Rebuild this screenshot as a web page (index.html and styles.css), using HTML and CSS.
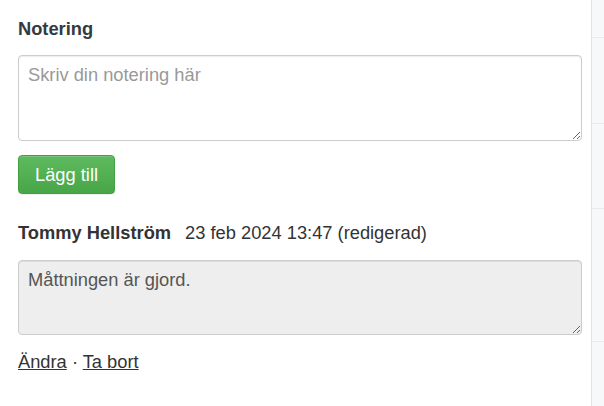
FILE: index.html
```html
<!DOCTYPE html>
<html lang="sv">
<head>
<meta charset="utf-8">
<link rel="stylesheet" href="styles.css">
</head>
<body>
<div class="page">
  <main class="main">
    <div class="label">Notering</div>
    <textarea class="field" placeholder="Skriv din notering här"></textarea>
    <button class="btn-success" type="button">Lägg till</button>
    <div class="meta"><span class="author">Tommy Hellström</span><span class="date">23 feb 2024 13:47 (redigerad)</span></div>
    <textarea class="field note" readonly>Måttningen är gjord.</textarea>
    <div class="actions"><a href="#">Ändra</a> · <a href="#">Ta bort</a></div>
  </main>
  <aside class="side">
    <div class="row r1"></div>
    <div class="row r2"></div>
    <div class="row r3"></div>
    <div class="row r4"></div>
    <div class="row r5"></div>
  </aside>
</div>
</body>
</html>
```
FILE: styles.css
```css
html, body {
  margin: 0;
  padding: 0;
  background: #fff;
}
body {
  font-family: "Liberation Sans", Arial, sans-serif;
  font-size: 18.3px;
  line-height: 26px;
  color: #333;
}
.page {
  display: flex;
  width: 604px;
  height: 406px;
  overflow: hidden;
}
.main {
  width: 591px;
  box-sizing: border-box;
  padding: 16px 9px 0 18px;
  display: flex;
  flex-direction: column;
  align-items: flex-start;
}
.label {
  font-weight: bold;
  color: #343a40;
  height: 26px;
}
.field {
  display: block;
  width: 564px;
  height: 86px;
  box-sizing: border-box;
  margin: 13px 0 0;
  padding: 6px 9px;
  border: 1px solid #ccc;
  border-radius: 4px;
  box-shadow: inset 0 1px 1px rgba(0,0,0,.075);
  font-family: "Liberation Sans", Arial, sans-serif;
  font-size: 18.3px;
  line-height: 26px;
  color: #555;
  background: #fff;
  resize: vertical;
  outline: none;
}
.field::placeholder {
  color: #999;
}
.btn-success {
  margin-top: 14px;
  height: 39px;
  padding: 6px 16px;
  border: 1px solid #42a042;
  border-radius: 4px;
  background-image: linear-gradient(to bottom, #5fba5f 0, #47a647 100%);
  color: #fff;
  font-family: "Liberation Sans", Arial, sans-serif;
  font-size: 18.3px;
  line-height: 24px;
  box-shadow: inset 0 1px 0 rgba(255,255,255,.15), 0 1px 1px rgba(0,0,0,.075);
  cursor: pointer;
}
.meta {
  margin-top: 26px;
  display: flex;
  gap: 14px;
  height: 26px;
}
.author {
  font-weight: bold;
}
.note {
  margin-top: 14px;
  height: 75px;
  background: #eee;
}
.actions {
  margin-top: 14px;
}
.actions a {
  color: #333;
  text-decoration: underline;
}
.side {
  width: 13px;
  border-left: 1px solid #dfe4eb;
  background: #f7f8fa;
}
.row {
  border-bottom: 1px solid #e8ebf0;
}
.r1 { height: 37px; }
.r2 { height: 85px; }
.r3 { height: 84px; }
.r4 { height: 132px; }
.r5 { border-bottom: 0; height: 60px; }
```
